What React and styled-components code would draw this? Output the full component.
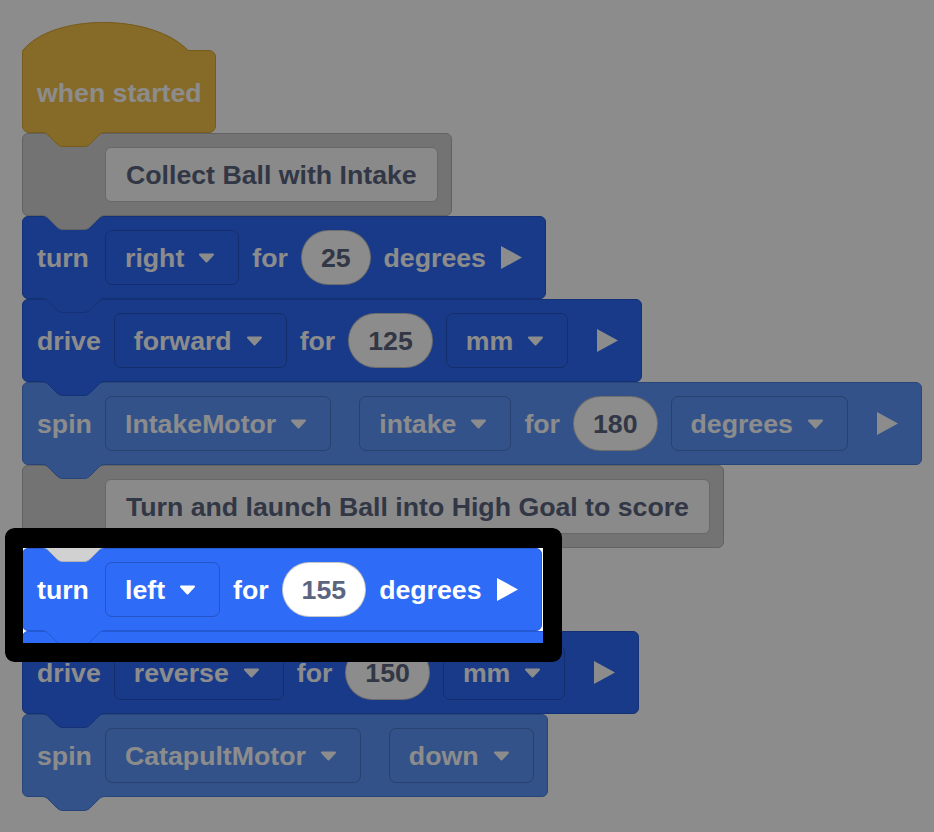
import React from "react";
import styled, { createGlobalStyle } from "styled-components";

const GlobalStyle = createGlobalStyle`
  html, body {
    margin: 0;
    background: #ffffff;
  }
  body {
    font-family: "Liberation Sans", Arial, sans-serif;
    font-weight: 700;
  }
`;

const palette = {
  event: { fill: "#f5c147", edge: "#d8a736" },
  note: { fill: "#d1d1d1", edge: "#b3b3b3" },
  drive: { fill: "#2e6bf7", edge: "#2459d4" },
  spin: { fill: "#5d96fa", edge: "#4a7ede" },
};

const op = (text) => ({ type: "op", text });
const word = (text) => ({ type: "word", text });
const menu = (text, spaced) => ({ type: "menu", text, spaced });
const num = (text) => ({ type: "num", text });
const run = (spaced) => ({ type: "run", spaced });

const program = [
  { kind: "note", text: "Collect Ball with Intake" },
  {
    kind: "drive",
    parts: [op("turn"), menu("right"), word("for"), num("25"), word("degrees"), run()],
  },
  {
    kind: "drive",
    parts: [op("drive"), menu("forward"), word("for"), num("125"), menu("mm"), run(true)],
  },
  {
    kind: "spin",
    parts: [
      op("spin"),
      menu("IntakeMotor"),
      menu("intake", true),
      word("for"),
      num("180"),
      menu("degrees"),
      run(true),
    ],
  },
  { kind: "note", text: "Turn and launch Ball into High Goal to score" },
  {
    kind: "drive",
    focus: true,
    parts: [op("turn"), menu("left"), word("for"), num("155"), word("degrees"), run()],
  },
  {
    kind: "drive",
    parts: [op("drive"), menu("reverse"), word("for"), num("150"), menu("mm"), run(true)],
  },
  {
    kind: "spin",
    parts: [op("spin"), menu("CatapultMotor"), menu("down", true)],
  },
];

const Canvas = styled.div`
  box-sizing: border-box;
  min-height: 832px;
  display: flex;
  flex-direction: column;
  align-items: flex-start;
  padding: 22px 0 0 22px;
`;

const Hat = styled.div`
  display: flex;
  flex-direction: column;
  width: 194px;
`;

const HatCap = styled.svg`
  display: block;
  position: relative;
  z-index: 1;
  margin-bottom: -2px;
  overflow: visible;
`;

const HatBody = styled.div`
  position: relative;
  box-sizing: border-box;
  height: 83px;
  display: flex;
  align-items: center;
  padding: 3px 0 0 14px;
  background: ${palette.event.fill};
  border: 1px solid ${palette.event.edge};
  border-radius: 0 7px 7px 7px;
  color: #ffffff;
  font-size: 26.7px;
`;

const Block = styled.div`
  position: relative;
  box-sizing: border-box;
  height: 83px;
  display: flex;
  align-items: center;
  gap: 13px;
  padding: 0 13px 0 ${(p) => (p.$note ? "82px" : "14px")};
  background: ${(p) => p.$fill};
  border: 1px solid ${(p) => p.$edge};
  border-radius: 6px;
  color: #ffffff;
  font-size: 26.7px;
  white-space: nowrap;
`;

const Label = styled.span`
  padding-top: 2px;
`;

const Opcode = styled(Label)`
  min-width: 55px;
`;

const Menu = styled.div`
  box-sizing: border-box;
  height: 55px;
  display: flex;
  align-items: center;
  gap: 14px;
  padding: 0 23px 0 19px;
  margin-left: ${(p) => (p.$spaced ? "15px" : "0")};
  border: 1px solid rgba(0, 0, 0, 0.2);
  border-radius: 7px;
`;

const Num = styled.div`
  box-sizing: border-box;
  height: 55px;
  display: flex;
  align-items: center;
  padding: 2px 19px 0;
  background: #ffffff;
  border: 1px solid rgba(0, 0, 0, 0.22);
  border-radius: 28px;
  color: #5c6580;
`;

const NoteText = styled.div`
  box-sizing: border-box;
  height: 55px;
  display: flex;
  align-items: center;
  padding: 2px 20px 0;
  background: #fbfbfb;
  border: 1px solid #bdbdbd;
  border-radius: 6px;
  color: #5c6580;
`;

const RunIcon = styled.svg`
  display: block;
  margin-left: ${(p) => (p.$spaced ? "16px" : "2px")};
  margin-right: 10px;
`;

const TabShape = styled.svg`
  position: absolute;
  left: 19px;
  top: 100%;
  z-index: 1;
  overflow: visible;
`;

// dims the whole canvas except the framed block
const Spotlight = styled.div`
  position: absolute;
  top: -21px;
  left: -18px;
  right: -21px;
  bottom: -32px;
  border: solid #000000;
  border-width: 20px 19px 19px 18px;
  border-radius: 9px;
  box-shadow: 0 0 0 2400px rgba(0, 0, 0, 0.45);
  z-index: 10;
  pointer-events: none;
`;

const TAB_EDGE =
  "M0 0.5 C3.5 0.5 5.25 2.25 7 4 L14 11 C15.75 12.75 17.5 14.5 21 14.5 H42 C45.5 14.5 47.25 12.75 49 11 L56 4 C57.75 2.25 59.5 0.5 63 0.5";

const Tab = ({ fill, edge }) => (
  <TabShape width="63" height="15" viewBox="0 0 63 15">
    <path d={`${TAB_EDGE} V0 H0 Z`} fill={fill} />
    <path d={TAB_EDGE} fill="none" stroke={edge} strokeWidth="1" />
  </TabShape>
);

const Caret = () => (
  <svg width="17" height="10" viewBox="0 0 17 10">
    <path
      d="M2 1.5 H15 L8.5 8.5 Z"
      fill="#ffffff"
      stroke="#ffffff"
      strokeWidth="2"
      strokeLinejoin="round"
    />
  </svg>
);

const Part = ({ part }) => {
  switch (part.type) {
    case "op":
      return <Opcode>{part.text}</Opcode>;
    case "word":
      return <Label>{part.text}</Label>;
    case "menu":
      return (
        <Menu $spaced={part.spaced}>
          <Label>{part.text}</Label>
          <Caret />
        </Menu>
      );
    case "num":
      return <Num>{part.text}</Num>;
    default:
      return (
        <RunIcon $spaced={part.spaced} width="21" height="23" viewBox="0 0 21 23">
          <path d="M0 0 L21 11.5 L0 23 Z" fill="#ffffff" />
        </RunIcon>
      );
  }
};

const StackBlock = ({ block }) => {
  const colors = palette[block.kind];
  const isNote = block.kind === "note";
  return (
    <Block $fill={colors.fill} $edge={colors.edge} $note={isNote}>
      {isNote ? (
        <NoteText>{block.text}</NoteText>
      ) : (
        block.parts.map((part, i) => <Part key={i} part={part} />)
      )}
      <Tab fill={colors.fill} edge={colors.edge} />
      {block.focus && <Spotlight />}
    </Block>
  );
};

const WhenStarted = () => (
  <Hat>
    <HatCap width="194" height="30" viewBox="0 0 194 30">
      <path d="M0 30 V29 C30 -9 130 -9 166 28 V30 Z" fill={palette.event.fill} />
      <path
        d="M0.5 29 C30 -9 130 -9 166 28.5"
        fill="none"
        stroke={palette.event.edge}
        strokeWidth="1"
      />
    </HatCap>
    <HatBody>
      when started
      <Tab fill={palette.event.fill} edge={palette.event.edge} />
    </HatBody>
  </Hat>
);

export default function App() {
  return (
    <>
      <GlobalStyle />
      <Canvas>
        <WhenStarted />
        {program.map((block, i) => (
          <StackBlock key={i} block={block} />
        ))}
      </Canvas>
    </>
  );
}
